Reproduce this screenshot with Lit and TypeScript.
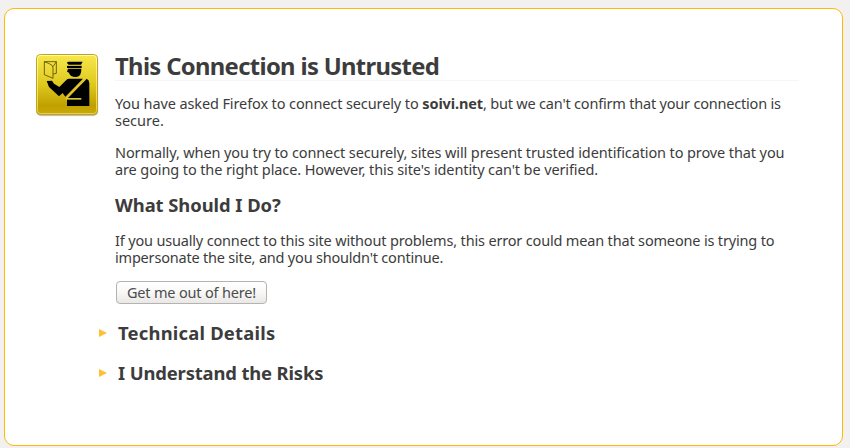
import { LitElement, html, css } from "lit";
import { customElement, property } from "lit/decorators.js";

@customElement("customs-icon")
class CustomsIcon extends LitElement {
  static styles = css`
    :host { display: block; height: 74px; }
    svg { display: block; }
  `;
  render() {
    return html`<svg width="74" height="74" viewBox="0 0 222 222">
      <defs>
        <linearGradient id="g" x1="0" y1="0" x2="0" y2="1">
          <stop offset="0" stop-color="#f8e84c" />
          <stop offset="0.5" stop-color="#dfc91f" />
          <stop offset="0.85" stop-color="#c0a000" />
          <stop offset="1" stop-color="#c9aa08" />
        </linearGradient>
        <linearGradient id="h" x1="0" y1="0" x2="0" y2="1">
          <stop offset="0" stop-color="#fffbb0" />
          <stop offset="1" stop-color="#e6cf4a" />
        </linearGradient>
      </defs>
      <rect x="18" y="21" width="187" height="184" rx="15" fill="#000" opacity="0.12" />
      <rect x="19" y="20" width="185" height="183" rx="14" fill="#000" opacity="0.2" />
      <rect x="19.5" y="19.5" width="183" height="180" rx="12" fill="url(#g)" stroke="#c3a416" stroke-width="3" />
      <rect x="22.5" y="22.5" width="177" height="174" rx="9" fill="none" stroke="url(#h)" stroke-width="3" />
      <g fill="none" stroke="#5c5008" stroke-width="2.6" stroke-linejoin="round">
        <path d="M43 80V41H79V76L70 78" />
        <path d="M43 41L58 47Q69 51 69 60V91L43 80M69 56L79 41" />
      </g>
      <g fill="#000">
        <path d="M111 45Q111 41 116 41H158L153 50H116Z" />
        <path d="M111 53.5H155V60H111Z" />
        <path d="M114 62H154Q155 84 139 87Q121 88 117 74L111 71Z" />
        <path d="M50 99L66 98L72 107L88 117L109 96Q112 92 118 92H159L106 146L98 135L87 145L57 117Z" />
        <path d="M170 92Q178 96 178 106V174H111V153Z" />
      </g>
      <g fill="none" stroke="#dcc533">
        <path d="M107 152L166 93" stroke-width="5" />
        <path d="M108 152.5H154" stroke-width="5" />
      </g>
    </svg>`;
  }
}

@customElement("expander-row")
class ExpanderRow extends LitElement {
  @property() label = "";
  static styles = css`
    :host { display: flex; align-items: center; height: 24px; gap: 11px; }
    .arrow { width: 8px; height: 8px; fill: #ffbf33; display: block; }
    .label { font-size: 18.4px; font-weight: 700; line-height: 24px; white-space: nowrap; }
  `;
  render() {
    return html`<svg class="arrow" viewBox="0 0 8 8"><path d="M0 0L8 4L0 8Z" /></svg>
      <span class="label">${this.label}</span>`;
  }
}

@customElement("app-root")
class AppRoot extends LitElement {
  static styles = css`
    :host {
      display: block; box-sizing: border-box; width: 850px; height: 448px;
      padding: 8px 6px 2px 4px; background: #f2f1f0; overflow: hidden;
      font-family: "Noto Sans", "Open Sans", sans-serif; color: #3c3c3c;
    }
    .panel {
      box-sizing: border-box; height: 438px; width: 839px; border: 1px solid #fcb90a;
      border-radius: 10px; background: #fff; display: flex; padding: 39px 0 0 25px;
    }
    .icon { flex: none; width: 85px; }
    .content { width: 684px; }
    h1 {
      margin: 0; height: 32px; line-height: 36px; font-size: 23.8px; font-weight: 700;
      letter-spacing: -0.66px; border-bottom: 1px solid #f6f6f6; white-space: nowrap;
    }
    p { margin: 0; font-size: 14.5px; line-height: 17px; white-space: nowrap; }
    .line { display: block; }
    .a { letter-spacing: -0.11px; }
    .rest { letter-spacing: -0.2px; }
    .b { letter-spacing: -0.11px; }
    .c { letter-spacing: -0.11px; }
    .d { letter-spacing: -0.17px; }
    .e { letter-spacing: -0.2px; }
    .intro { margin-top: 14px; }
    .reason { margin-top: 15px; }
    h2 { margin: 15px 0 0; font-size: 18.4px; line-height: 24px; font-weight: 700; white-space: nowrap; letter-spacing: -0.05px; }
    .advice { margin-top: 15px; }
    button {
      display: block; box-sizing: border-box; width: 151px; height: 23px; margin: 15px 0 0 1px; padding: 0 0 1px;
      border: 1px solid #b5b2af; border-radius: 4px; background: linear-gradient(#fff, #f8f8f7 50%, #e9e8e7);
      font: 14.5px/20px "Noto Sans", "Open Sans", sans-serif; color: #4c4c4c; white-space: nowrap;
      letter-spacing: -0.17px;
    }
    .rows { margin: 17px 0 0 -16px; display: flex; flex-direction: column; gap: 16px; }
    .technical { letter-spacing: 0.22px; }
    .risks { letter-spacing: -0.14px; }
  `;
  render() {
    return html`<main class="panel">
      <customs-icon class="icon"></customs-icon>
      <div class="content">
        <h1>This Connection is Untrusted</h1>
        <p class="intro">
          <span class="line a">You have asked Firefox to connect securely to <b>soivi.net</b><span class="rest">, but we can't confirm that your connection is</span></span>
          <span class="line">secure.</span>
        </p>
        <p class="reason">
          <span class="line b">Normally, when you try to connect securely, sites will present trusted identification to prove that you</span>
          <span class="line c">are going to the right place. However, this site's identity can't be verified.</span>
        </p>
        <h2>What Should I Do?</h2>
        <p class="advice">
          <span class="line d">If you usually connect to this site without problems, this error could mean that someone is trying to</span>
          <span class="line e">impersonate the site, and you shouldn't continue.</span>
        </p>
        <button>Get me out of here!</button>
        <div class="rows">
          <expander-row class="technical" label="Technical Details"></expander-row>
          <expander-row class="risks" label="I Understand the Risks"></expander-row>
        </div>
      </div>
    </main>`;
  }
}
